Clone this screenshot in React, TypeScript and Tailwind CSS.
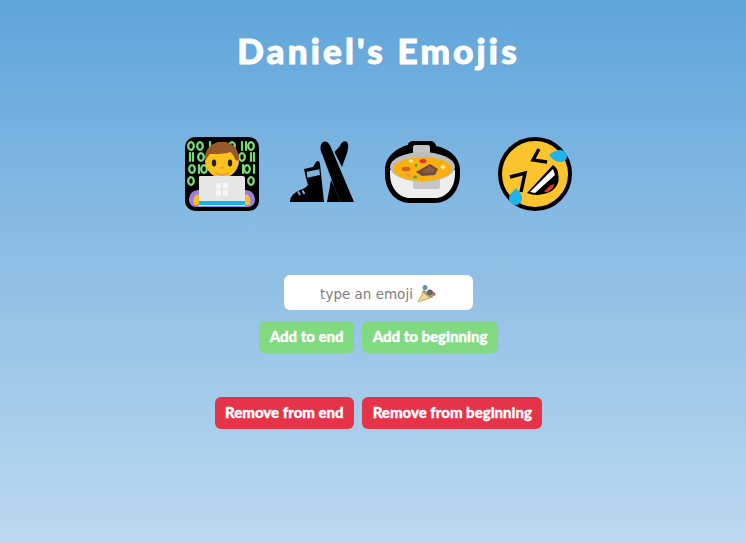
const bits: [number, number, string][] = [
  [6, 10, "0"], [15, 10, "0"], [25, 10, "1"], [47, 10, "0"], [57, 10, "1"], [61, 10, "1"], [66, 10, "0"],
  [5, 21, "1"], [8, 21, "1"], [16, 21, "0"], [57, 21, "0"], [66, 21, "1"], [69, 21, "1"],
  [7, 33, "0"], [14, 33, "1"], [19, 33, "0"], [58, 33, "1"], [62, 33, "0"], [69, 33, "1"],
  [6, 45, "0"], [15, 45, "1"], [18, 45, "1"], [66, 45, "0"],
];

function Technologist() {
  return (
    <svg width="75" height="75" viewBox="0 0 75 75" className="shrink-0">
      <rect x="0" y="1" width="74" height="74" rx="10" fill="#000" />
      {bits.map(([x, y, b], i) =>
        b === "0" ? (
          <ellipse key={i} cx={x} cy={y} rx="2.800" ry="3.800" fill="none" stroke="#77dd77" strokeWidth="2.300" />
        ) : (
          <rect key={i} x={x - 1.1} y={y - 4.8} width="2.200" height="9.600" fill="#77dd77" />
        )
      )}
      <path d="M4 64c0-6 4-10 10-10h46c6 0 10 4 10 10 0 4-3 7-7 7H11c-4 0-7-3-7-7z" fill="#9b7fe0" />
      <path d="M9 69c-1-6 0-9 2-10 3-1 6 0 8 2v8zM65 69c1-6 0-9-2-10-3-1-6 0-8 2v8z" fill="#f6bb2c" />
      <ellipse cx="37" cy="24" rx="17" ry="18" fill="#fcc21b" />
      <path d="M20 25C19 12 27 6 37 6c10 0 17 6 17 18-1 1-3 1-4-1-1-3-3-6-5-7-5 2-13 2-20 2-2 2-3 4-5 7z" fill="#96592b" />
      <ellipse cx="29" cy="27" rx="2.200" ry="3.400" fill="#222" />
      <ellipse cx="45" cy="27" rx="2.200" ry="3.400" fill="#222" />
      <path d="M35 31h4l-2 2.500z" fill="#e8963a" />
      <path d="M31 37c3 2.500 9 2.500 12 0" fill="none" stroke="#e8963a" strokeWidth="1.600" strokeLinecap="round" />
      <path d="M14 42c0-1 1-2 2-2h42c1 0 2 1 2 2v28H14z" fill="#e6e6e6" />
      <rect x="14" y="65" width="46" height="4" fill="#12b5ea" />
      <g fill="#f7f7f7">
        <rect x="31" y="47" width="5" height="5.500" />
        <rect x="38" y="47" width="5" height="5.500" />
        <rect x="31" y="54" width="5" height="5.500" />
        <rect x="38" y="54" width="5" height="5.500" />
      </g>
    </svg>
  );
}

function Skis() {
  return (
    <svg width="75" height="75" viewBox="0 0 75 75" className="shrink-0">
      <path d="M35.500 12c0-4 2-6.500 4.500-6.500 3 0 4.500 3 5.500 5L69 66H55L37.500 19c-1-2-2-4-2-7z" fill="#000" />
      <path d="M55 10c1-4 5-6 7-4 2 3 1 8 0 11l-5 14-7.500-15zM46 44l-4 22h13l-5.500-15z" fill="#000" />
      <path d="M19 33l9-2 3-5c2-2 3.500-1 4 2l4 38H5v-2c1-4 4-7 8-9s8-3 10-6l-2-7z" fill="#000" />
      <path d="M21.700 35.700L34.300 33.300 35 39 22.300 41.700z" fill="#7ab3e0" />
      <path d="M13 55.500l2 3.500M17.500 54.500l2 3.500" fill="none" stroke="#7ab3e0" strokeWidth="1.800" />
    </svg>
  );
}

function Stew() {
  return (
    <svg width="75" height="75" viewBox="0 0 75 75" className="shrink-0">
      <path d="M23 9c0-3 3-4 6-4h16c3 0 6 2 6 5 11 2 24 10 24 24v4c0 17-11 29-25 29H25C11 67 0 55 0 38v-4C0 20 12 12 23 9z" fill="#000" />
      <path d="M28 20v-9c0-1 1-2 2-2h13c1 0 2 1 2 2v9z" fill="#c4c4c4" />
      <path d="M5 34v4c0 14 9 24 20 24h25c11 0 20-10 20-24v-4z" fill="#eeeeee" />
      <path d="M28 44h27v7c0 1-1 2-2 2H30c-1 0-2-1-2-2z" fill="#c7c7c7" />
      <ellipse cx="37.500" cy="31" rx="32.500" ry="15" fill="#bdbdbd" />
      <ellipse cx="37.500" cy="33" rx="29.500" ry="12" fill="#fbb011" />
      <path d="M31 36l14-8 8 5-3 6-13 1z" fill="#6d4c41" />
      <path d="M36 36l9-6 6 4-3 3z" fill="#8d5a44" />
      <ellipse cx="21" cy="33" rx="4.500" ry="2.300" fill="#d8641c" />
      <ellipse cx="38" cy="25" rx="3.500" ry="2" fill="#e82c2c" />
      <ellipse cx="26" cy="25" rx="2.200" ry="1.500" fill="#fff3b0" />
      <path d="M58 28l1 2 2 1-2 1-1 2-1-2-2-1 2-1z" fill="#fff3b0" />
      <rect x="30" y="28" width="2" height="2.500" fill="#3f9c35" />
      <ellipse cx="30" cy="41" rx="2" ry="1.500" fill="#4aa83c" />
      <ellipse cx="23" cy="39" rx="2.500" ry="1.500" fill="#f39a3c" />
    </svg>
  );
}

function Rofl() {
  return (
    <svg width="75" height="75" viewBox="0 0 75 75" className="shrink-0">
      <circle cx="37" cy="38" r="35" fill="#fcc42c" stroke="#000" strokeWidth="4" />
      <path d="M41 13L35 24l14 2M12 41l15-4-4 19" fill="none" stroke="#000" strokeWidth="3.400" />
      <path d="M29 57L55 29c3 2 5 5 5 8 1 5 1 9-1 12-2 4-6 7-10 8-5 2-13 3-20 0z" fill="#000" />
      <path d="M32 56L55 33l2 6-20 18z" fill="#fff" />
      <path d="M46 56c3-4 6-7 10-8 0 4-4 7-7 8z" fill="#e5331f" />
      <path d="M51 19c3-3 7-5 11-5 4 0 7 3 7 6 0 4-3 6-7 6-4 0-8-3-11-7z" fill="#1fb3ea" />
      <path d="M18 52c3 3 6 7 6 10 0 4-3 7-6 7-4 0-7-3-7-7 0-3 4-7 7-10z" fill="#1fb3ea" />
    </svg>
  );
}

function Button({ children, className }: { children: string; className: string }) {
  return (
    <button className={`h-8 rounded-md px-[10.500px] pb-[2px] text-[15px] font-black text-white [-webkit-text-stroke:0.3px_white] ${className}`}>
      {children}
    </button>
  );
}

export default function App() {
  return (
    <div className="flex min-h-[543px] flex-col items-center bg-gradient-to-b from-[#5fa5da] to-[#bcd9ef] pl-[11px] font-['Lato',sans-serif]">
      <h1 className="mt-[28px] text-[35px] leading-[44px] font-black tracking-[3.200px] text-white [-webkit-text-stroke:1px_white]">Daniel's Emojis</h1>
      <div className="mt-[64px] flex gap-[25px]">
        <Technologist />
        <Skis />
        <Stew />
        <div className="ml-[13px]">
          <Rofl />
        </div>
      </div>
      <div className="relative mt-[64px]">
        <input
          placeholder="type an emoji"
          className="block h-[35px] w-[189px] rounded-md bg-white pt-[3px] pr-[24px] text-center font-['DejaVu_Sans',sans-serif] text-[13.500px] outline-none placeholder:text-[#7d7d7d]"
        />
        <svg width="19" height="19" viewBox="0 0 19 19" className="absolute top-[9px] left-[133px]">
          <path d="M1 18l6-12 9 7z" fill="#f8d57e" stroke="#8f8a70" strokeWidth="0.600" />
          <path d="M7 6l9 7-3 1-8-6z" fill="#a89a78" />
          <circle cx="8" cy="3.500" r="2.500" fill="#5f93a8" />
          <circle cx="13" cy="8.500" r="3" fill="#6a5f68" />
          <circle cx="16.500" cy="10" r="2" fill="#b7645f" />
        </svg>
      </div>
      <div className="mt-[11px] flex gap-[8px]">
        <Button className="bg-[#81d981]">Add to end</Button>
        <Button className="bg-[#81d981]">Add to beginning</Button>
      </div>
      <div className="mt-[44px] flex gap-[8px]">
        <Button className="bg-[#e5334a]">Remove from end</Button>
        <Button className="bg-[#e5334a]">Remove from beginning</Button>
      </div>
    </div>
  );
}
